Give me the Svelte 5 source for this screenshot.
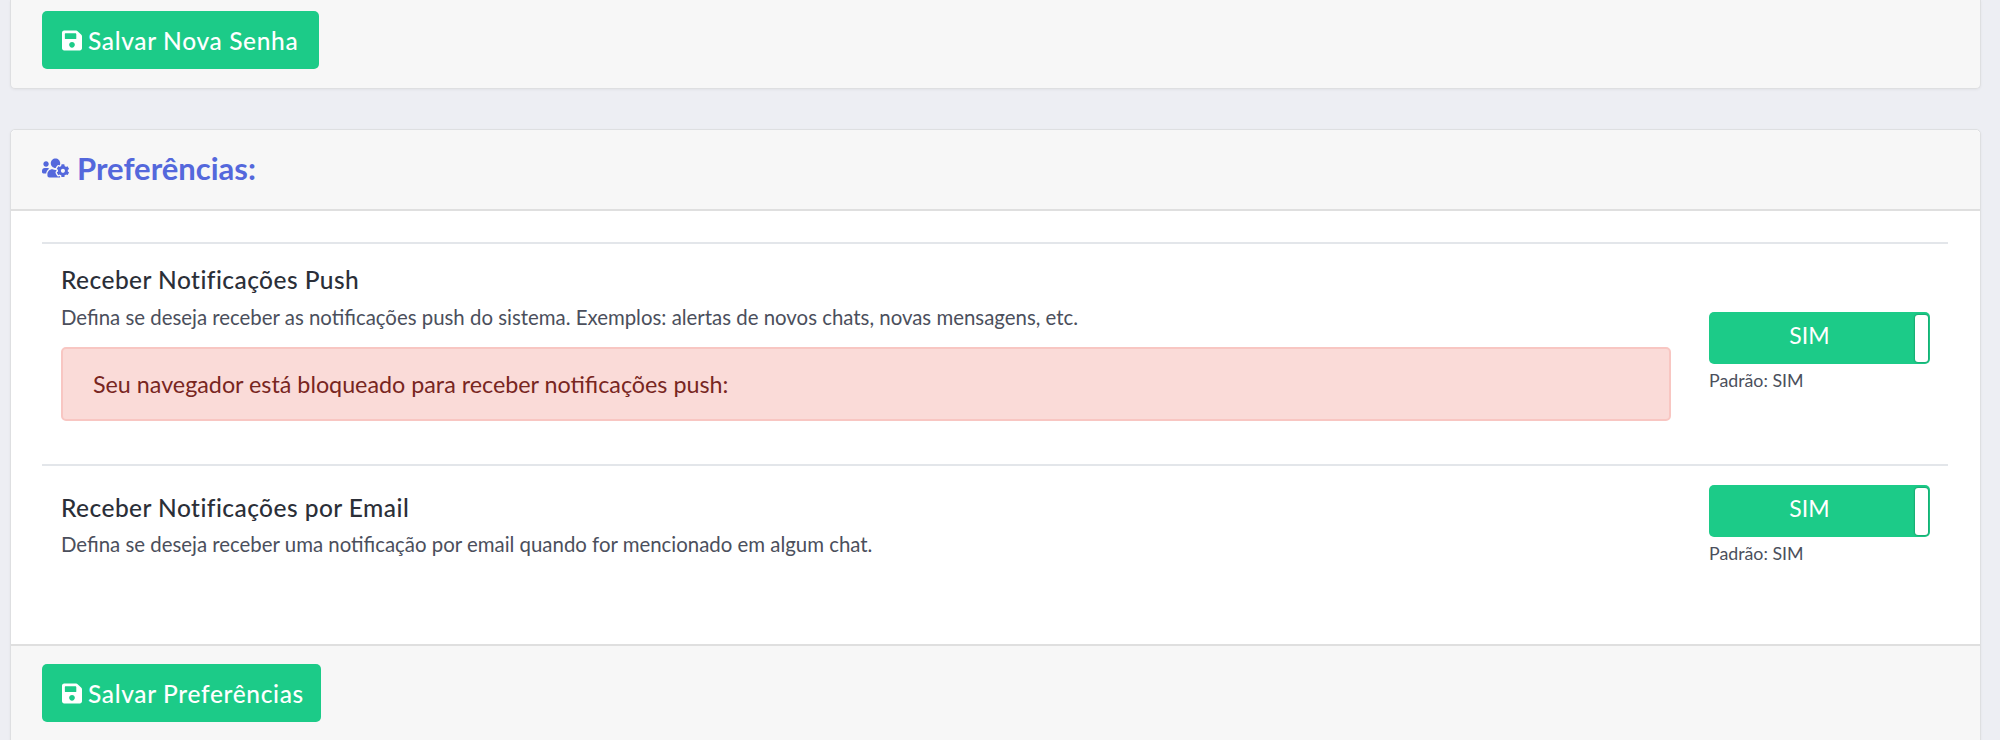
<script lang="ts">
  const savePath = 'M433.941 129.941l-83.882-83.882A48 48 0 0 0 316.118 32H48C21.49 32 0 53.49 0 80v352c0 26.51 21.49 48 48 48h352c26.51 0 48-21.49 48-48V163.882a48 48 0 0 0-14.059-33.941zM224 416c-35.346 0-64-28.654-64-64 0-35.346 28.654-64 64-64s64 28.654 64 64c0 35.346-28.654 64-64 64zm96-304.52V212c0 6.627-5.373 12-12 12H76c-6.627 0-12-5.373-12-12V108c0-6.627 5.373-12 12-12h228.52c3.183 0 6.235 1.264 8.485 3.515l3.48 3.48A11.996 11.996 0 0 1 320 111.48z';
  const usersCog = 'M610.5 341.3c2.6-14.1 2.6-28.5 0-42.6l25.8-14.9c3-1.7 4.3-5.2 3.3-8.5-6.7-21.6-18.2-41.2-33.2-57.4-2.3-2.5-6-3.1-9-1.4l-25.8 14.9c-10.9-9.3-23.4-16.5-36.9-21.3v-29.8c0-3.4-2.4-6.4-5.7-7.1-22.3-5-45-4.8-66.2 0-3.3.7-5.7 3.7-5.7 7.1v29.8c-13.5 4.8-26 12-36.9 21.3l-25.8-14.9c-2.9-1.7-6.7-1.1-9 1.4-15 16.2-26.5 35.8-33.2 57.4-1 3.3.4 6.8 3.3 8.5l25.8 14.9c-2.6 14.1-2.6 28.5 0 42.6l-25.8 14.9c-3 1.7-4.3 5.2-3.3 8.5 6.7 21.6 18.2 41.1 33.2 57.4 2.3 2.5 6 3.1 9 1.4l25.8-14.9c10.9 9.3 23.4 16.5 36.9 21.3v29.8c0 3.4 2.4 6.4 5.7 7.1 22.3 5 45 4.8 66.2 0 3.3-.7 5.7-3.7 5.7-7.1v-29.8c13.5-4.8 26-12 36.9-21.3l25.8 14.9c2.9 1.7 6.7 1.1 9-1.4 15-16.2 26.5-35.8 33.2-57.4 1-3.3-.4-6.8-3.3-8.5l-25.8-14.9zM496 368.5c-26.8 0-48.5-21.8-48.5-48.5s21.8-48.5 48.5-48.5 48.5 21.8 48.5 48.5-21.7 48.5-48.5 48.5zM96 224c35.3 0 64-28.7 64-64s-28.7-64-64-64-64 28.7-64 64 28.7 64 64 64zm224 32c1.9 0 3.7-.5 5.6-.6 8.3-21.7 20.5-42.1 36.3-59.2 7.4-8 17.9-12.6 28.9-12.6 6.9 0 13.7 1.8 19.6 5.3l7.9 4.6c.8-.5 1.6-.9 2.4-1.4 7-14.6 11.2-30.8 11.2-48 0-61.9-50.1-112-112-112S208 82.1 208 144c0 61.9 50.1 112 112 112zm105.2 194.5c-2.3-1.2-4.6-2.6-6.8-3.9-8.2 4.8-15.3 9.8-27.5 9.8-10.9 0-21.4-4.6-28.9-12.6-18.3-19.8-32.3-43.9-40.2-69.6-10.7-34.5 24.9-49.7 25.8-50.3-.1-2.6-.1-5.2 0-7.8l-7.9-4.6c-3.8-2.2-7-5-9.8-8.1-3.3.2-6.5.6-9.8.6-24.6 0-47.6-6-68.5-16h-8.3C179.6 288 128 339.6 128 403.2V432c0 26.5 21.5 48 48 48h255.4c-3.7-6-6.2-12.8-6.2-20.3v-9.2zM173.1 274.6C161.5 263.1 145.6 256 128 256H64c-35.3 0-64 28.7-64 64v32c0 17.7 14.3 32 32 32h65.9c6.3-47.4 34.9-87.3 75.2-109.4z';

  const prefs = [
    {
      title: 'Receber Notificações Push',
      desc: 'Defina se deseja receber as notificações push do sistema. Exemplos: alertas de novos chats, novas mensagens, etc.',
      alert: 'Seu navegador está bloqueado para receber notificações push:'
    },
    {
      title: 'Receber Notificações por Email',
      desc: 'Defina se deseja receber uma notificação por email quando for mencionado em algum chat.',
      alert: ''
    }
  ];
</script>

<div class="page">
  <div class="card top">
    <button class="btn" type="button">
      <svg viewBox="0 0 448 512"><path d={savePath} /></svg>
      Salvar Nova Senha
    </button>
  </div>

  <div class="card prefs">
    <div class="head">
      <svg viewBox="0 0 640 512"><path d={usersCog} /></svg>
      <span>Preferências:</span>
    </div>
    <div class="body">
      {#each prefs as p}
        <div class="row">
          <div class="info">
            <h4>{p.title}</h4>
            <p>{p.desc}</p>
            {#if p.alert}
              <div class="alert">{p.alert}</div>
            {/if}
          </div>
          <div class="side">
            <div class="toggle">
              <span>SIM</span>
              <i></i>
            </div>
            <small>Padrão: SIM</small>
          </div>
        </div>
      {/each}
    </div>
    <div class="foot">
      <button class="btn" type="button">
        <svg viewBox="0 0 448 512"><path d={savePath} /></svg>
        Salvar Preferências
      </button>
    </div>
  </div>
</div>

<style>
  :global(body) {
    background: #edeef3;
    font-family: Lato, "Open Sans", sans-serif;
  }

  .page {
    height: 740px;
    overflow: hidden;
    padding: 0 19px 0 10px;
    box-sizing: border-box;
  }

  .card {
    background: #fff;
    border: 1px solid #dedfe1;
    border-radius: 5px;
    box-sizing: border-box;
    box-shadow: 0 1px 3px rgba(0, 0, 0, 0.05);
  }

  .top {
    background: #f7f7f7;
    border-top: 0;
    border-radius: 0 0 5px 5px;
    padding: 11px 31px 18px;
    height: 89px;
    margin-bottom: 40px;
  }

  .btn {
    display: inline-flex;
    align-items: center;
    gap: 6px;
    height: 58px;
    padding: 0 0 0 20px;
    background: #1ccb88;
    border: 0;
    border-radius: 5px;
    color: #fff;
    font-family: inherit;
    font-size: 24.5px;
    letter-spacing: 0.65px;
    font-weight: 500;
    white-space: nowrap;
  }

  .btn svg {
    flex-shrink: 0;
    width: 20px;
    height: 23px;
    fill: #fff;
  }

  .top .btn {
    width: 277px;
  }

  .foot .btn {
    width: 279px;
  }

  .head {
    display: flex;
    align-items: center;
    gap: 8px;
    height: 81px;
    padding: 0 31px 4px;
    box-sizing: border-box;
    background: #f7f7f7;
    border-bottom: 2px solid #dfdfdf;
    border-radius: 5px 5px 0 0;
    color: #5468dc;
    font-size: 31px;
    font-weight: 700;
  }

  .head svg {
    width: 27px;
    height: 22px;
    fill: #5468dc;
  }

  .body {
    padding: 31px 32px 0 31px;
    height: 433px;
    box-sizing: border-box;
  }

  .row {
    display: flex;
    border-top: 2px solid #e3e6ea;
    padding: 0 18px 0 19px;
    justify-content: space-between;
  }

  .row:first-child {
    height: 222px;
    box-sizing: border-box;
  }

  .info {
    width: 1610px;
    padding-top: 27px;
  }

  .row:first-child .info {
    padding-top: 21px;
  }

  .row:first-child p {
    margin-top: 9px;
  }

  h4 {
    margin: 0;
    font-size: 24.5px;
    letter-spacing: 0.45px;
    font-weight: 500;
    line-height: 30px;
    color: #2b2f38;
  }

  p {
    margin: 8px 0 0;
    font-size: 20.4px;
    line-height: 26px;
    color: #4b4f5c;
  }

  .alert {
    margin-top: 17px;
    height: 74px;
    box-sizing: border-box;
    padding: 0 30px;
    display: flex;
    align-items: center;
    background: #fadbd8;
    border: 2px solid #f8c6c2;
    border-radius: 5px;
    color: #78261f;
    font-size: 23.3px;
  }

  .side {
    width: 221px;
    padding-top: 19px;
  }

  .row:first-child .side {
    padding-top: 68px;
  }

  .toggle {
    position: relative;
    height: 52px;
    background: #1ccb88;
    border-radius: 5px;
    color: #fff;
    font-size: 23px;
    line-height: 46px;
    text-align: center;
    padding-right: 20px;
    box-sizing: border-box;
  }

  .toggle i {
    position: absolute;
    top: 3px;
    right: 2px;
    bottom: 2px;
    width: 13px;
    background: #fff;
    border-radius: 3px;
    box-shadow: 0 0 2px rgba(0, 0, 0, 0.5);
  }

  small {
    display: block;
    margin-top: 5px;
    font-size: 17.8px;
    color: #4b4f5c;
  }

  .foot {
    height: 120px;
    padding: 18px 31px;
    box-sizing: border-box;
    background: #f7f7f7;
    border-top: 2px solid #dfdfdf;
  }
</style>
